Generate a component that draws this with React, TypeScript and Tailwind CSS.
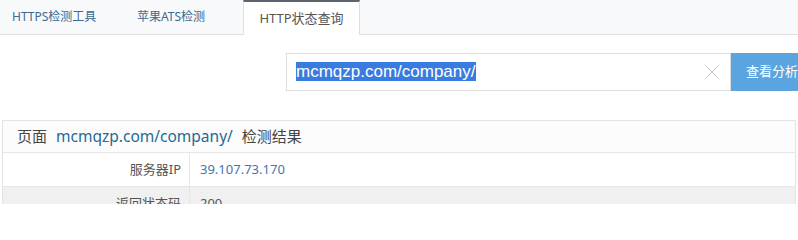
import { X } from "lucide-react"

const FONT = "font-['Noto_Sans','Noto_Sans_CJK_SC',sans-serif]"

const rows = [
  { label: "服务器IP", value: "39.107.73.170", link: true },
  { label: "返回状态码", value: "200", link: false },
]

function Tabs() {
  return (
    <div className="flex h-[35px] items-end border-b border-[#dcdfe3] bg-[#f7f9fb]">
      <div className="flex h-full items-center pl-[12px]">
        <div className="w-[125px] text-[12px] text-[#3d6a8f]">HTTPS检测工具</div>
        <div className="w-[106px] text-[12px] text-[#3d6a8f]">苹果ATS检测</div>
        <div className="relative -mb-px flex h-[35px] w-[117px] items-center justify-center border-x border-t-2 border-x-[#dcdfe3] border-t-[#5c6470] bg-white text-[13px] text-[#555]">
          HTTP状态查询
        </div>
      </div>
    </div>
  )
}

function SearchBar() {
  return (
    <div className="flex justify-end pt-[18px]">
      <div className="flex h-[38px] w-[512px]">
        <div className="flex flex-1 items-center border border-[#dddddd] pl-[9px] pr-[7px]">
          <span className="flex-1 font-['Liberation_Sans',sans-serif] text-[17px] leading-[22px]">
            <span className="bg-[#3a7be0] text-white">mcmqzp.com/company/</span>
          </span>
          <X className="h-[22px] w-[22px] text-[#b5b5b5]" strokeWidth={0.9} />
        </div>
        <button className="w-[67px] overflow-hidden whitespace-nowrap bg-[#5aa5e0] pl-[15px] text-left text-[13px] text-white">
          查看分析
        </button>
      </div>
    </div>
  )
}

function Result() {
  return (
    <div className="mx-[2px] mt-[29px] border border-[#e3e3e3]">
      <div className="flex h-[32px] items-center border-b border-[#e6e6e6] bg-[#fcfcfc] pl-[14px] text-[15px] text-[#444]">
        <span>页面</span>
        <span className="ml-[9px] text-[15.5px] text-[#1f6a96]">mcmqzp.com/company/</span>
        <span className="ml-[9px]">检测结果</span>
      </div>
      {rows.map((row, idx) => (
        <div
          key={row.label}
          className={`flex h-[34px] border-b border-[#e6e6e6] text-[13px] ${idx % 2 ? "bg-[#f0f0f0]" : "bg-white"}`}
        >
          <div className="flex w-[187px] items-center justify-end border-r border-[#e6e6e6] pr-[8px] text-[#555]">
            {row.label}
          </div>
          <div className={`flex items-center pl-[10px] ${row.link ? "text-[#3f76b0]" : "text-[#555]"}`}>
            {row.value}
          </div>
        </div>
      ))}
    </div>
  )
}

export default function App() {
  return (
    <div className={`h-[204px] w-[798px] overflow-hidden bg-white ${FONT}`}>
      <Tabs />
      <SearchBar />
      <Result />
    </div>
  )
}
